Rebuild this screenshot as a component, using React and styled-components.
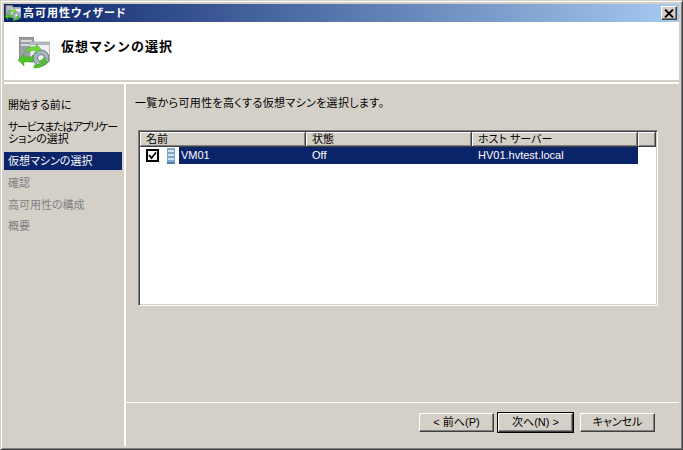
import React from 'react';
import styled, { createGlobalStyle } from 'styled-components';

const Global = createGlobalStyle`
  html, body { margin: 0; padding: 0; background: #d4d0c8; }
  body {
    font-family: "Liberation Sans", "Noto Sans CJK JP", sans-serif;
    font-size: 11px;
    font-feature-settings: "palt";
    color: #000;
  }
`;

const Win = styled.div`
  width: 683px;
  height: 450px;
  box-sizing: border-box;
  background: #d4d0c8;
  border: 1px solid;
  border-color: #d4d0c8 #404040 #404040 #d4d0c8;
  box-shadow: inset 1px 1px 0 #fff, inset -1px -1px 0 #808080;
  padding: 3px;
  display: flex;
  flex-direction: column;
  overflow: hidden;
`;

const TitleBar = styled.div`
  height: 18px;
  flex: none;
  display: flex;
  align-items: center;
  padding: 0 2px 0 1px;
  background: linear-gradient(90deg, #0a246a, #a6caf0);
  color: #fff;
  font-size: 11px;
  font-weight: 700;
  gap: 2px;
`;

const TitleText = styled.span`
  line-height: 18px;
  margin-top: -1px;
  letter-spacing: 1px;
`;

const CloseBtn = styled.div`
  width: 16px;
  height: 14px;
  margin-left: auto;
  background: #d4d0c8;
  box-sizing: border-box;
  border: 1px solid;
  border-color: #fff #404040 #404040 #fff;
  box-shadow: inset -1px -1px 0 #808080;
  display: flex;
  align-items: center;
  justify-content: center;
`;

const Header = styled.div`
  height: 58px;
  flex: none;
  background: #fff;
  display: flex;
  align-items: flex-start;
  box-sizing: border-box;
  padding: 15px 0 0 14px;
  gap: 11px;
`;

const HeaderTitle = styled.h1`
  margin: 1px 0 0;
  font-size: 13px;
  line-height: 18px;
  font-weight: 700;
  letter-spacing: 1px;
  font-feature-settings: "palt" 0;
`;

const HeaderRule = styled.div`
  height: 4px;
  flex: none;
  background: #fff;
  border-top: 2px solid #d4d0c8;
  box-sizing: border-box;
`;

const Body = styled.div`
  flex: 1;
  display: flex;
  min-height: 0;
  margin: 0 -2px;
`;

const Side = styled.nav`
  width: 122px;
  flex: none;
  border-right: 2px solid #fff;
  padding-top: 12px;
  display: flex;
  flex-direction: column;
`;

const Step = styled.div`
  margin: ${p => p.$mt || 0}px 2px 0;
  padding: 0 4px;
  font-size: 11px;
  line-height: 12px;
  min-height: 18px;
  display: flex;
  align-items: center;
  white-space: nowrap;
  color: ${p => (p.$active ? '#fff' : p.$off ? '#808080' : '#000')};
  background: ${p => (p.$active ? '#0a246a' : 'transparent')};
`;

const StepLines = styled.span`
  display: block;
`;

const TightLine = styled.span`
  letter-spacing: -1.2px;
`;

const Main = styled.main`
  flex: 1;
  display: flex;
  flex-direction: column;
  min-width: 0;
`;

const Content = styled.div`
  flex: 1;
  padding: 11px 0 0 9px;
  box-sizing: border-box;
`;

const Lead = styled.p`
  margin: 0 0 19px;
  font-size: 11px;
  line-height: 16px;
  letter-spacing: 0.33px;
`;

const List = styled.div`
  width: 520px;
  height: 176px;
  margin-left: 3px;
  box-sizing: border-box;
  background: #fff;
  border: 1px solid;
  border-color: #808080 #fff #fff #808080;
  box-shadow: inset 1px 1px 0 #404040, inset -1px -1px 0 #d4d0c8;
  padding: 1px;
`;

const HeadRow = styled.div`
  display: grid;
  grid-template-columns: 166px 166px 166px 1fr;
  height: 15px;
`;

const HeadCell = styled.div`
  box-sizing: border-box;
  background: #d4d0c8;
  border-right: 1px solid #404040;
  border-bottom: 1px solid #404040;
  box-shadow: inset 1px 1px 0 #fff, inset -1px -1px 0 #808080;
  padding-left: 6px;
  line-height: 14px;
  font-size: 11px;
`;

const Row = styled.div`
  display: grid;
  grid-template-columns: 166px 166px 166px;
  height: 17px;
  align-items: stretch;
`;

const NameCell = styled.div`
  display: flex;
  align-items: center;
  padding-left: 6px;
`;

const Check = styled.div`
  width: 13px;
  height: 13px;
  box-sizing: border-box;
  border: 2px solid #000;
  background: #fff;
  display: flex;
  align-items: center;
  justify-content: center;
`;

const VmIcon = styled.svg`
  margin-left: 8px;
  flex: none;
`;

const NameLabel = styled.div`
  margin-left: 4px;
  flex: 1;
  align-self: stretch;
  background: #0a246a;
  color: #fff;
  padding-left: 2px;
  line-height: 17px;
`;

const Cell = styled.div`
  background: #0a246a;
  color: #fff;
  padding-left: 6px;
  line-height: 17px;
`;

const Footer = styled.div`
  flex: none;
  height: 44px;
  box-sizing: border-box;
  border-top: 1px solid #fff;
  margin-right: 2px;
  display: flex;
  justify-content: flex-end;
  padding: 10px 24px 0 0;
`;

const Btn = styled.button`
  width: 75px;
  height: 19px;
  padding: 0;
  font: inherit;
  font-size: 11px;
  line-height: 15px;
  color: #000;
  background: #d4d0c8;
  box-sizing: border-box;
  border: 1px solid;
  border-color: #fff #404040 #404040 #fff;
  box-shadow: ${p => (p.$primary ? '0 0 0 1px #000, inset -1px -1px 0 #808080' : 'inset -1px -1px 0 #808080')};
  margin-left: ${p => p.$ml || 0}px;
`;

const WizardArt = ({ size }) => (
  <svg width={size} height={size} viewBox="0 0 32 32">
    <rect x="1.5" y="0.5" width="14" height="22" fill="#9a9fa3" stroke="#6c7074" strokeWidth=".7" />
    <rect x="3" y="3" width="11" height="2" fill="#d8dadc" />
    <rect x="3" y="7" width="11" height="2" fill="#d8dadc" />
    <rect x="12" y="5" width="19.5" height="20" fill="#eef0f2" stroke="#a8acb0" strokeWidth=".8" />
    <rect x="12" y="5" width="19.5" height="3" fill="#b4b8bc" />
    <circle cx="23" cy="21" r="8" fill="#a9b6c2" stroke="#6f7c88" />
    <circle cx="23" cy="21" r="3.5" fill="#eef0f2" stroke="#6f7c88" />
    <path d="M0 23 L6 17 L6 20 L13 20 L15 18 L15 25 L6 25 L6 29 Z" fill="#4fc52c" stroke="#2f8f1b" strokeWidth=".4" />
    <path d="M7 14 C10 10 14 9 18 10 L18 7 L23 12 L18 17 L18 14 C14 13 11 14 9 16 Z" fill="#6fd63a" stroke="#2f8f1b" strokeWidth=".4" />
    <path d="M16 28 C20 28 23 27 24 25 L21 25 L27 20 L29 26 L27 26 C25 30 21 31 16 31 Z" fill="#4fc52c" stroke="#2f8f1b" strokeWidth=".4" />
  </svg>
);

export default function App() {
  return (
    <>
      <Global />
      <Win>
        <TitleBar>
          <WizardArt size={16} />
          <TitleText>高可用性ウィザード</TitleText>
          <CloseBtn>
            <svg width="10" height="9" viewBox="0 0 10 9">
              <path d="M1 0.5 L9 8.5 M9 0.5 L1 8.5" stroke="#000" strokeWidth="1.8" />
            </svg>
          </CloseBtn>
        </TitleBar>
        <Header>
          <WizardArt size={32} />
          <HeaderTitle>仮想マシンの選択</HeaderTitle>
        </Header>
        <HeaderRule />
        <Body>
          <Side>
            <Step>開始する前に</Step>
            <Step $mt={7}>
              <StepLines>
                <TightLine>サービスまたはアプリケー</TightLine><br />ションの選択
              </StepLines>
            </Step>
            <Step $active $mt={7}>仮想マシンの選択</Step>
            <Step $off $mt={4}>確認</Step>
            <Step $off $mt={4}>高可用性の構成</Step>
            <Step $off $mt={3}>概要</Step>
          </Side>
          <Main>
            <Content>
              <Lead>一覧から可用性を高くする仮想マシンを選択します。</Lead>
              <List>
                <HeadRow>
                  <HeadCell>名前</HeadCell>
                  <HeadCell>状態</HeadCell>
                  <HeadCell>ホスト サーバー</HeadCell>
                  <HeadCell />
                </HeadRow>
                <Row>
                  <NameCell>
                    <Check>
                      <svg width="9" height="9" viewBox="0 0 9 9">
                        <path d="M1 4 L3.5 7 L8 1.5" fill="none" stroke="#000" strokeWidth="1.8" />
                      </svg>
                    </Check>
                    <VmIcon width="8" height="16" viewBox="0 0 8 16">
                      <rect width="8" height="16" fill="#7fa6cc" />
                      <rect x="1" y="2" width="6" height="2" fill="#cfe0ee" />
                      <rect x="1" y="6" width="6" height="2" fill="#cfe0ee" />
                      <rect x="1" y="10" width="6" height="2" fill="#cfe0ee" />
                      <rect y="14" width="8" height="2" fill="#4f7fae" />
                    </VmIcon>
                    <NameLabel>VM01</NameLabel>
                  </NameCell>
                  <Cell>Off</Cell>
                  <Cell>HV01.hvtest.local</Cell>
                </Row>
              </List>
            </Content>
            <Footer>
              <Btn>&lt; 前へ(P)</Btn>
              <Btn $primary $ml={4}>次へ(N) &gt;</Btn>
              <Btn $ml={7}>キャンセル</Btn>
            </Footer>
          </Main>
        </Body>
      </Win>
    </>
  );
}
